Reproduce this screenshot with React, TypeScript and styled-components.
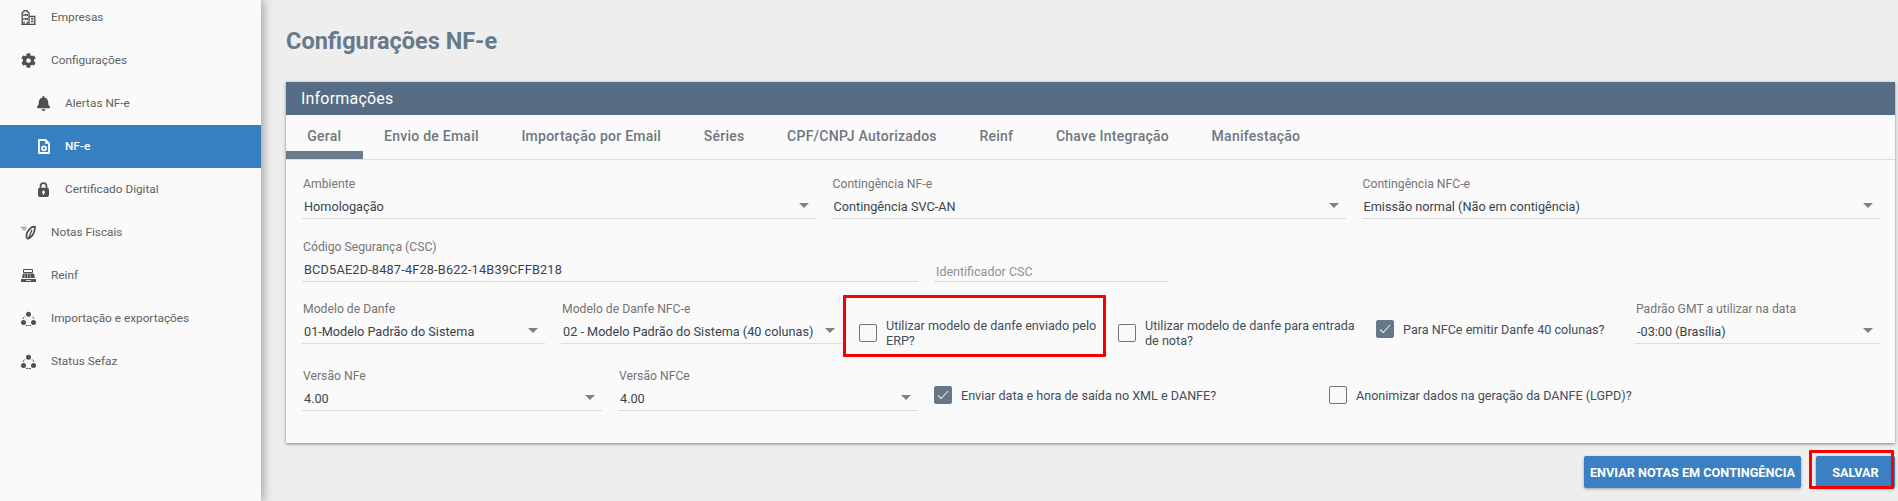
import React from 'react';
import styled, { createGlobalStyle } from 'styled-components';
import { FaBell, FaCog } from 'react-icons/fa';

const GlobalStyle = createGlobalStyle`
  html, body { margin: 0; padding: 0; background: #eeeeee; }
  * { box-sizing: border-box; }
  body { font-family: Roboto, "Liberation Sans", sans-serif; overflow: hidden; }
`;

const Page = styled.div`
  position: relative;
  display: flex;
  width: 1898px;
  height: 501px;
  overflow: hidden;
  background: #eeeeee;
`;

const Sidebar = styled.nav`
  flex: 0 0 261px;
  padding-top: 0;
  background: #fafafa;
  box-shadow: 2px 0 10px rgba(0, 0, 0, 0.35);
  z-index: 1;
`;

const MenuList = styled.ul`
  list-style: none;
  margin: -4px 0 0;
  padding: 0;
`;

const MenuItem = styled.li<{ $sub?: boolean; $active?: boolean }>`
  display: flex;
  align-items: center;
  gap: ${p => (p.$sub ? '14px' : '15px')};
  height: 43px;
  padding: 0 0 1px ${p => (p.$sub ? '36px' : '21px')};
  font-size: 11.8px;
  font-weight: ${p => (p.$active ? 500 : 400)};
  color: ${p => (p.$active ? '#ffffff' : '#616161')};
  background: ${p => (p.$active ? '#3680c2' : 'transparent')};
`;

const IconBox = styled.span`
  display: flex;
  align-items: center;
  justify-content: center;
  flex: 0 0 15px;
  width: 15px;
  height: 15px;
  font-size: 15px;
  color: #505050;
  svg { display: block; flex: none; }
`;

const ActiveIconBox = styled(IconBox)`
  color: #ffffff;
`;

const Main = styled.main`
  flex: 1;
  min-width: 0;
  padding: 0 3px 0 25px;
`;

const Title = styled.h1`
  display: flex;
  align-items: center;
  height: 82px;
  margin: 0;
  font-size: 23.5px;
  font-weight: 700;
  color: #667a8c;
`;

const Card = styled.section`
  height: 361px;
  background: #fafafa;
  box-shadow: 0 1px 3px rgba(0, 0, 0, 0.45);
`;

const CardHeader = styled.header`
  display: flex;
  align-items: center;
  height: 33px;
  padding-left: 15px;
  font-size: 16px;
  letter-spacing: 0.2px;
  color: #ffffff;
  background: #566c84;
`;

const Tabs = styled.div`
  display: flex;
  height: 45px;
  border-bottom: 1px solid #dddddd;
`;

const Tab = styled.div<{ $active?: boolean }>`
  height: 44px;
  padding: 6px 21.3px 0;
  font-size: 14px;
  font-weight: 500;
  line-height: 30px;
  letter-spacing: 0.25px;
  color: #6f7780;
  border-bottom: 8px solid ${p => (p.$active ? '#687a8c' : 'transparent')};
`;

const CardBody = styled.div`
  padding: 0 15px 0 16px;
`;

const Row = styled.div<{ $top: number }>`
  display: flex;
  align-items: flex-start;
  margin-top: ${p => p.$top}px;
`;

const Field = styled.div<{ $width: number; $left?: number }>`
  flex: 0 0 ${p => p.$width}px;
  width: ${p => p.$width}px;
  margin-left: ${p => p.$left ?? 0}px;
`;

const FieldLabel = styled.label`
  display: block;
  height: 16px;
  padding-left: 1px;
  font-size: 12.2px;
  line-height: 16px;
  color: #757575;
`;

const FieldValue = styled.div<{ $placeholder?: boolean }>`
  display: flex;
  align-items: center;
  justify-content: space-between;
  height: 27px;
  padding: ${p => (p.$placeholder ? '6px' : '3px')} 7px 0 2px;
  font-size: ${p => (p.$placeholder ? '12.5px' : '12.7px')};
  white-space: nowrap;
  color: ${p => (p.$placeholder ? '#8a929b' : '#39424e')};
  border-bottom: 1px solid #dcdcdc;
`;

const CodeValue = styled(FieldValue)`
  letter-spacing: 0.2px;
`;

const Arrow = styled.span`
  flex: none;
  width: 0;
  height: 0;
  margin-top: -2px;
  border-left: 5px solid transparent;
  border-right: 5px solid transparent;
  border-top: 5px solid #808080;
`;

const CheckField = styled.div<{ $width: number; $top: number; $left?: number }>`
  display: flex;
  align-items: center;
  gap: 9px;
  flex: 0 0 ${p => p.$width}px;
  width: ${p => p.$width}px;
  margin-top: ${p => p.$top}px;
  margin-left: ${p => p.$left ?? 0}px;
  font-size: 12.6px;
  line-height: 15px;
  color: #444d59;
`;

const CheckLabel = styled.span<{ $width?: number }>`
  width: ${p => (p.$width ? `${p.$width}px` : 'auto')};
`;

const Box = styled.span<{ $checked?: boolean }>`
  display: flex;
  align-items: center;
  justify-content: center;
  flex: 0 0 18px;
  width: 18px;
  height: 18px;
  border-radius: 2px;
  border: 1px solid ${p => (p.$checked ? '#667788' : '#757575')};
  background: ${p => (p.$checked ? '#667788' : '#fafafa')};
`;

const Footer = styled.div`
  display: flex;
  justify-content: flex-end;
  gap: 15px;
  margin-top: 13px;
`;

const Button = styled.button<{ $width: number }>`
  width: ${p => p.$width}px;
  height: 32px;
  padding: 0;
  border: 0;
  border-radius: 2px;
  font-family: inherit;
  font-size: 12.7px;
  font-weight: 700;
  color: #ffffff;
  background: #3a80c3;
  box-shadow: 0 1px 3px rgba(0, 0, 0, 0.35);
`;

// red marks drawn over the screenshot
const RedMark = styled.div<{ $x: number; $y: number; $w: number; $h: number }>`
  position: absolute;
  left: ${p => p.$x}px;
  top: ${p => p.$y}px;
  width: ${p => p.$w}px;
  height: ${p => p.$h}px;
  border: 3px solid #f50000;
  border-radius: 1px;
  z-index: 2;
  pointer-events: none;
`;

const BuildingIcon = () => (
  <svg width="15" height="15" viewBox="0 0 15 15" fill="none" stroke="currentColor" strokeWidth="1.3">
    <path d="M1.200 14.500V2.600L3 1.600V.5h3v1.100l2 1v11.900M8 6.500h5.800v8M.3 14.500h14.400" />
    <path d="M3 4v2M4.700 4v2M6.300 4v2M3 8v2M4.700 8v2M6.300 8v2M3 11.500v3M6.300 11.500v3M10 9h2.500M10 11.500h2.500" strokeWidth="1.300" />
  </svg>
);

const DocGearIcon = () => (
  <svg width="12" height="15" viewBox="0 0 12 15" fill="none">
    <path d="M1 1h6.500L11 4.500V14H1z" stroke="currentColor" strokeWidth="1.800" strokeLinejoin="round" />
    <path d="M7.200 1v3.800H11z" fill="currentColor" />
    <circle cx="6" cy="9.300" r="2" stroke="currentColor" strokeWidth="1.700" />
  </svg>
);

const LockIcon = () => (
  <svg width="11" height="15" viewBox="0 0 11 15" fill="currentColor">
    <path d="M2.500 6.500V4.200a3 3 0 0 1 6 0v2.300" fill="none" stroke="currentColor" strokeWidth="1.700" />
    <path d="M2 5.800h7A2 2 0 0 1 11 7.800v5.200a2 2 0 0 1-2 2H2a2 2 0 0 1-2-2V7.800a2 2 0 0 1 2-2zM5.500 8.500a1.500 1.500 0 0 0-.7 2.800v1.400h1.400v-1.400a1.500 1.500 0 0 0-.7-2.800z" fillRule="evenodd" />
  </svg>
);

const LeafIcon = () => (
  <svg width="15" height="15" viewBox="0 0 15 15" fill="none">
    <path d="M0 2.500h5.500M1.500 4.500h3.500" stroke="#a0a0a0" strokeWidth="1.700" />
    <path d="M6.300 13.500c-1.500-1.800-1-5.600 1.600-8.700 1.600-1.900 4-3.400 6.100-3-.2 3.400-1.100 6.800-3.100 9.100-1.400 1.600-3.200 2.800-4.600 2.600z" stroke="#505050" strokeWidth="1.800" />
    <path d="M7.500 14 10.800 5" stroke="#505050" strokeWidth="1.300" />
  </svg>
);

const RegisterIcon = () => (
  <svg width="15" height="13" viewBox="0 0 15 13" fill="currentColor">
    <path d="M2.500.5h9v3h-9z" fill="none" stroke="currentColor" strokeWidth="1" />
    <path d="M2 4.500h11L14 9H1z" />
    <path d="M0 10h15v3H0z" />
    <path d="M3.500 6h1M6 6h1M8.500 6h1M3 7.800h1M6 7.800h1M9 7.800h1" stroke="#fafafa" strokeWidth=".9" />
    <path d="M5 11.500h5" stroke="#fafafa" strokeWidth=".8" />
  </svg>
);

const CycleIcon = () => (
  <svg width="15" height="15" viewBox="0 0 15 15" fill="currentColor">
    <circle cx="7.500" cy="3.200" r="2.500" />
    <circle cx="2.500" cy="11.500" r="2.500" />
    <circle cx="12.500" cy="11.500" r="2.500" />
    <path d="M3.700 5.500A5.800 5.800 0 0 0 2 8M11.300 5.500a5.800 5.800 0 0 1 1.700 2.500M5 14.400a6 6 0 0 0 5 0" fill="none" stroke="currentColor" strokeWidth="1" />
  </svg>
);

const CheckMark = () => (
  <svg width="12" height="10" viewBox="0 0 12 10" fill="none" stroke="#e4e8ec" strokeWidth="1.100">
    <path d="M1 5.500 4.200 8.500 11 1" />
  </svg>
);

const tabs = ['Geral', 'Envio de Email', 'Importação por Email', 'Séries', 'CPF/CNPJ Autorizados', 'Reinf', 'Chave Integração', 'Manifestação'];

interface SelectProps {
  label: string;
  value: string;
  width: number;
  left?: number;
}

const SelectField = ({ label, value, width, left }: SelectProps) => (
  <Field $width={width} $left={left}>
    <FieldLabel>{label}</FieldLabel>
    <FieldValue>
      {value}
      <Arrow />
    </FieldValue>
  </Field>
);

const App = () => {
  return (
    <Page>
      <GlobalStyle />
      <Sidebar>
        <MenuList>
          <MenuItem><IconBox><BuildingIcon /></IconBox>Empresas</MenuItem>
          <MenuItem><IconBox><FaCog /></IconBox>Configurações</MenuItem>
          <MenuItem $sub><IconBox><FaBell /></IconBox>Alertas NF-e</MenuItem>
          <MenuItem $sub $active><ActiveIconBox><DocGearIcon /></ActiveIconBox>NF-e</MenuItem>
          <MenuItem $sub><IconBox><LockIcon /></IconBox>Certificado Digital</MenuItem>
          <MenuItem><IconBox><LeafIcon /></IconBox>Notas Fiscais</MenuItem>
          <MenuItem><IconBox><RegisterIcon /></IconBox>Reinf</MenuItem>
          <MenuItem><IconBox><CycleIcon /></IconBox>Importação e exportações</MenuItem>
          <MenuItem><IconBox><CycleIcon /></IconBox>Status Sefaz</MenuItem>
        </MenuList>
      </Sidebar>
      <Main>
        <Title>Configurações NF-e</Title>
        <Card>
          <CardHeader>Informações</CardHeader>
          <Tabs>
            {tabs.map((tab, index) => (
              <Tab key={tab} $active={index === 0}>{tab}</Tab>
            ))}
          </Tabs>
          <CardBody>
            <Row $top={16}>
              <SelectField label="Ambiente" value="Homologação" width={514} />
              <SelectField label="Contingência NF-e" value="Contingência SVC-AN" width={514} left={15.5} />
              <SelectField label="Contingência NFC-e" value="Emissão normal (Não em contigência)" width={518} left={16} />
            </Row>
            <Row $top={20}>
              <Field $width={616}>
                <FieldLabel>Código Segurança (CSC)</FieldLabel>
                <CodeValue>BCD5AE2D-8487-4F28-B622-14B39CFFB218</CodeValue>
              </Field>
              <Field $width={235} $left={16}>
                <FieldLabel />
                <FieldValue $placeholder>Identificador CSC</FieldValue>
              </Field>
            </Row>
            <Row $top={19}>
              <SelectField label="Modelo de Danfe" value="01-Modelo Padrão do Sistema" width={243} />
              <SelectField label="Modelo de Danfe NFC-e" value="02 - Modelo Padrão do Sistema (40 colunas)" width={281} left={16} />
              <CheckField $width={259} $top={17} $left={17}>
                <Box />
                <CheckLabel $width={215}>Utilizar modelo de danfe enviado pelo ERP?</CheckLabel>
              </CheckField>
              <CheckField $width={258} $top={17}>
                <Box />
                <CheckLabel $width={215}>Utilizar modelo de danfe para entrada de nota?</CheckLabel>
              </CheckField>
              <CheckField $width={259} $top={19}>
                <Box $checked><CheckMark /></Box>
                <CheckLabel>Para NFCe emitir Danfe 40 colunas?</CheckLabel>
              </CheckField>
              <SelectField label="Padrão GMT a utilizar na data" value="-03:00 (Brasília)" width={245} />
            </Row>
            <Row $top={20}>
              <SelectField label="Versão NFe" value="4.00" width={300} />
              <SelectField label="Versão NFCe" value="4.00" width={300} left={16} />
              <CheckField $width={395} $top={18} $left={16}>
                <Box $checked><CheckMark /></Box>
                <CheckLabel>Enviar data e hora de saída no XML e DANFE?</CheckLabel>
              </CheckField>
              <CheckField $width={320} $top={18}>
                <Box />
                <CheckLabel>Anonimizar dados na geração da DANFE (LGPD)?</CheckLabel>
              </CheckField>
            </Row>
          </CardBody>
        </Card>
        <Footer>
          <Button $width={217}>ENVIAR NOTAS EM CONTINGÊNCIA</Button>
          <Button $width={79}>SALVAR</Button>
        </Footer>
      </Main>
      <RedMark $x={843} $y={295} $w={263} $h={62} />
      <RedMark $x={1809} $y={450} $w={85} $h={39} />
    </Page>
  );
};

export default App;
